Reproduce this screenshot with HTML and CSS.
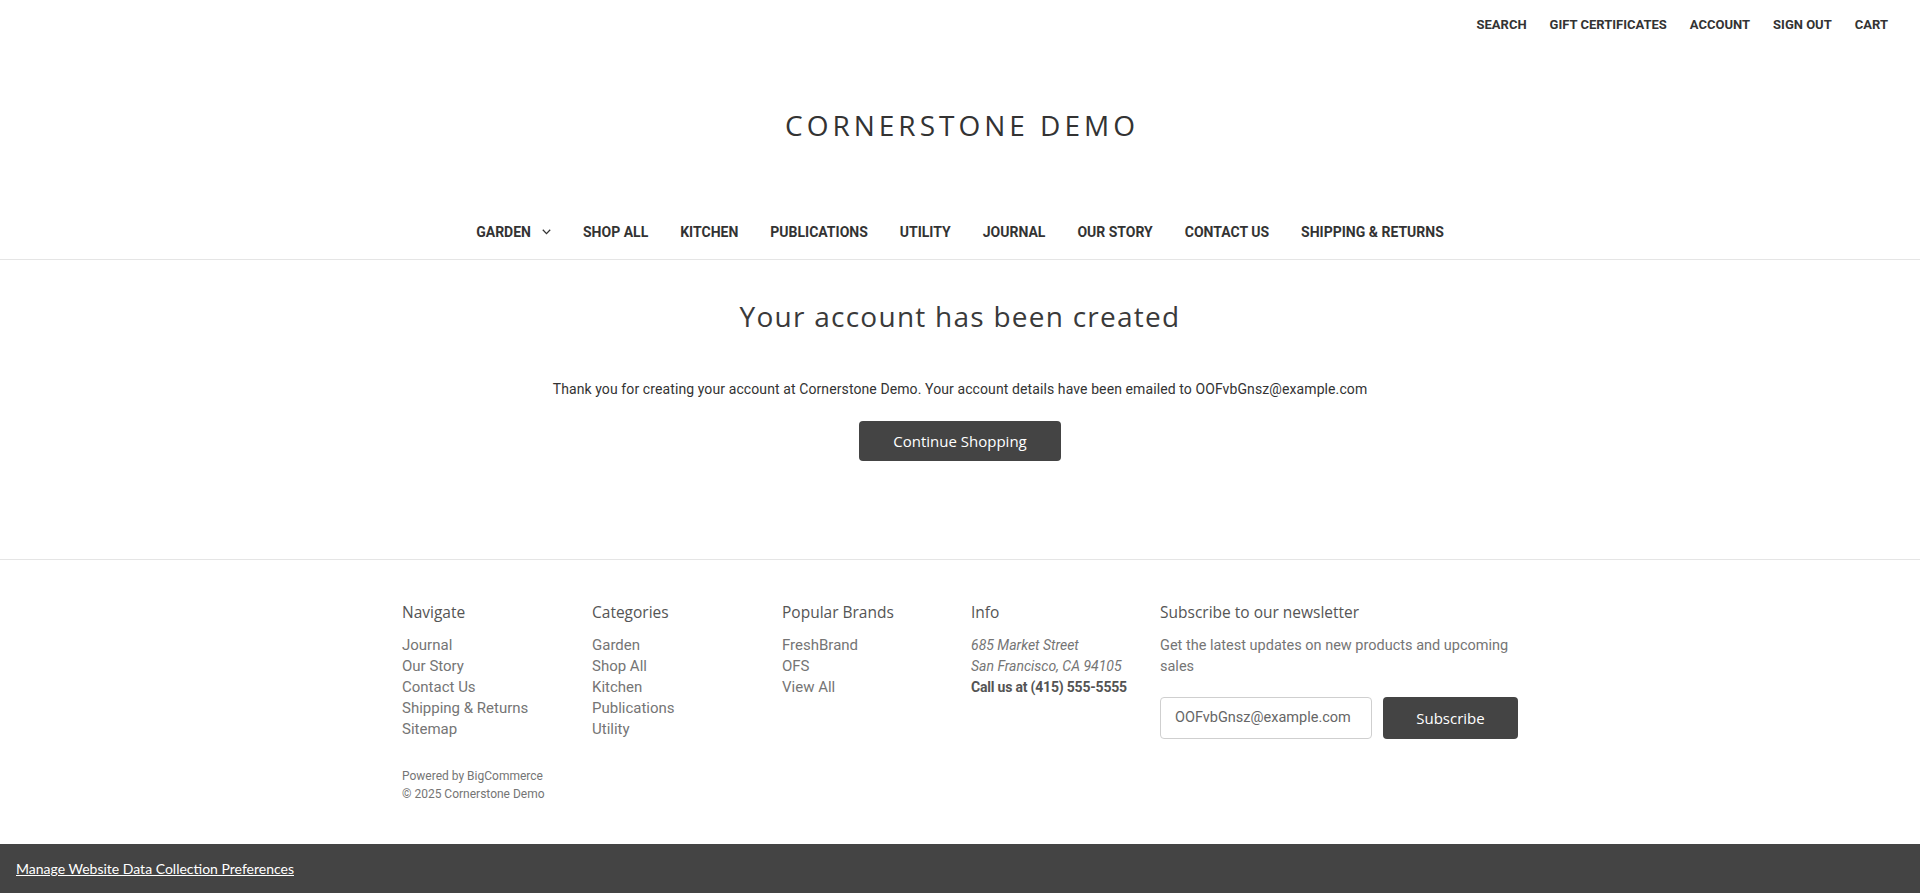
FILE: index.html
```html
<!DOCTYPE html>
<html lang="en">
<head>
<meta charset="utf-8">
<title>Cornerstone Demo - Account Created</title>
<link rel="stylesheet" href="styles.css">
</head>
<body>
<header class="header">
  <nav class="topbar">
    <a href="#">Search</a>
    <a href="#">Gift Certificates</a>
    <a href="#">Account</a>
    <a href="#">Sign Out</a>
    <a href="#">Cart</a>
  </nav>
  <div class="logo-wrap">
    <a class="logo" href="#">Cornerstone Demo</a>
  </div>
  <nav class="mainnav">
    <ul class="mainnav-list">
      <li><a href="#">Garden<svg class="chev" width="9" height="6" viewBox="0 0 9 6"><polyline points="0.8,0.8 4.5,4.6 8.2,0.8" fill="none" stroke="#333" stroke-width="1.3"/></svg></a></li>
      <li><a href="#">Shop All</a></li>
      <li><a href="#">Kitchen</a></li>
      <li><a href="#">Publications</a></li>
      <li><a href="#">Utility</a></li>
      <li><a href="#">Journal</a></li>
      <li><a href="#">Our Story</a></li>
      <li><a href="#">Contact Us</a></li>
      <li><a href="#">Shipping &amp; Returns</a></li>
    </ul>
  </nav>
</header>

<main class="page">
  <h1 class="page-heading">Your account has been created</h1>
  <p class="page-text">Thank you for creating your account at Cornerstone Demo. Your account details have been emailed to OOFvbGnsz@example.com</p>
  <a class="btn" href="#">Continue Shopping</a>
</main>

<footer class="footer">
  <div class="footer-inner">
    <section class="footer-col">
      <h5 class="footer-heading">Navigate</h5>
      <ul class="footer-list">
        <li>Journal</li>
        <li>Our Story</li>
        <li>Contact Us</li>
        <li>Shipping &amp; Returns</li>
        <li>Sitemap</li>
      </ul>
    </section>
    <section class="footer-col">
      <h5 class="footer-heading">Categories</h5>
      <ul class="footer-list">
        <li>Garden</li>
        <li>Shop All</li>
        <li>Kitchen</li>
        <li>Publications</li>
        <li>Utility</li>
      </ul>
    </section>
    <section class="footer-col">
      <h5 class="footer-heading">Popular Brands</h5>
      <ul class="footer-list">
        <li>FreshBrand</li>
        <li>OFS</li>
        <li>View All</li>
      </ul>
    </section>
    <section class="footer-col footer-col-info">
      <h5 class="footer-heading">Info</h5>
      <address class="footer-address">685 Market Street<br>San Francisco, CA 94105</address>
      <div class="footer-call">Call us at (415) 555-5555</div>
    </section>
    <section class="footer-col footer-col-news">
      <h5 class="footer-heading">Subscribe to our newsletter</h5>
      <p class="footer-news-text">Get the latest updates on new products and upcoming sales</p>
      <form class="news-form">
        <input class="news-input" type="email" value="OOFvbGnsz@example.com">
        <button class="news-btn" type="button">Subscribe</button>
      </form>
    </section>
  </div>
  <div class="footer-bottom">
    <p class="footer-small">Powered by BigCommerce</p>
    <p class="footer-small">© 2025 Cornerstone Demo</p>
  </div>
</footer>

<div class="consent">
  <a class="consent-link" href="#">Manage Website Data Collection Preferences</a>
</div>
</body>
</html>
```

FILE: styles.css
```css
* { box-sizing: border-box; }

body {
  margin: 0;
  font-family: Roboto, "Liberation Sans", sans-serif;
  color: #333;
  background: #fff;
}

a { color: inherit; text-decoration: none; }

/* top utility bar */
.topbar {
  display: flex;
  justify-content: flex-end;
  align-items: center;
  gap: 23px;
  height: 48px;
  padding-right: 32px;
}
.topbar a {
  font-size: 13px;
  font-weight: 700;
  text-transform: uppercase;
  color: #333;
}

/* logo */
.logo-wrap {
  height: 156px;
  display: flex;
  align-items: center;
  justify-content: center;
}
.logo {
  font-family: "Open Sans", sans-serif;
  font-size: 28px;
  font-weight: 400;
  letter-spacing: 4px;
  margin-right: -4px;
  margin-bottom: 2px;
  text-transform: uppercase;
  color: #333;
}

/* main nav */
.mainnav {
  border-bottom: 1px solid #e5e5e5;
}
.mainnav-list {
  list-style: none;
  margin: 0;
  padding: 0;
  height: 55px;
  display: flex;
  justify-content: center;
  align-items: center;
}
.mainnav-list a {
  display: flex;
  align-items: center;
  padding: 0 16px;
  font-size: 14px;
  font-weight: 700;
  text-transform: uppercase;
  color: #333;
}
.chev {
  margin-left: 11px;
  margin-top: 1px;
}

/* page body */
.page {
  display: flex;
  flex-direction: column;
  align-items: center;
  padding: 38px 0 98px;
}
.page-heading {
  margin: 0;
  font-family: "Open Sans", sans-serif;
  font-size: 28px;
  font-weight: 400;
  line-height: 36px;
  letter-spacing: 1.25px;
  color: #3a3a3a;
}
.page-text {
  margin: 45px 0 0;
  font-size: 14px;
  line-height: 21px;
  letter-spacing: 0.1px;
  color: #333;
}
.btn {
  margin-top: 21px;
  height: 40px;
  line-height: 40px;
  padding: 0 34px;
  background: #444;
  color: #fff;
  border-radius: 4px;
  font-family: "Open Sans", sans-serif;
  font-size: 15px;
}

/* footer */
.footer {
  border-top: 1px solid #e5e5e5;
  padding: 42px 0 60px;
}
.footer-inner {
  width: 1140px;
  margin: 0 auto;
  display: grid;
  grid-template-columns: repeat(4, 190px) 380px;
}
.footer-col {
  padding: 0 12px;
}
.footer-col-info {
  padding-left: 11px;
}
.footer-col-news {
  padding-left: 10px;
}
.footer-heading {
  margin: 0 0 12.5px;
  font-family: "Open Sans", sans-serif;
  font-size: 15.5px;
  font-weight: 400;
  line-height: 20px;
  color: #555;
}
.footer-list {
  list-style: none;
  margin: 0;
  padding: 0;
}
.footer-list li {
  font-size: 15px;
  line-height: 21px;
  color: #757575;
}
.footer-address,
.footer-call,
.footer-news-text {
  font-size: 14px;
  line-height: 21px;
  color: #757575;
}
.footer-address {
  font-style: italic;
}
.footer-call {
  font-weight: 700;
  letter-spacing: -0.2px;
  color: #545454;
}
.footer-news-text {
  margin: 0;
  font-size: 14.5px;
}
.news-form {
  margin: 20px 0 0;
  display: flex;
  gap: 11px;
}
.news-input {
  flex: 1;
  min-width: 0;
  height: 42px;
  padding: 0 8px 0 14px;
  border: 1px solid #cfcfcf;
  border-radius: 4px;
  font-family: Roboto, "Liberation Sans", sans-serif;
  font-size: 14.5px;
  color: #666;
}
.news-btn {
  width: 135px;
  height: 42px;
  border: 0;
  border-radius: 4px;
  background: #444;
  color: #fff;
  font-family: "Open Sans", sans-serif;
  font-size: 15px;
}
.footer-bottom {
  width: 1140px;
  margin: 27px auto 0;
  padding: 0 12px;
}
.footer-small {
  margin: 0;
  font-size: 12px;
  line-height: 18px;
  color: #757575;
}

/* consent bar (fixed overlay) */
.consent {
  position: fixed;
  left: 0;
  right: 0;
  bottom: 0;
  height: 49px;
  background: #444;
  display: flex;
  align-items: center;
  padding-left: 16px;
}
.consent-link {
  font-family: Lato, "Liberation Sans", sans-serif;
  font-size: 14px;
  color: #fff;
  text-decoration: underline;
}
```
